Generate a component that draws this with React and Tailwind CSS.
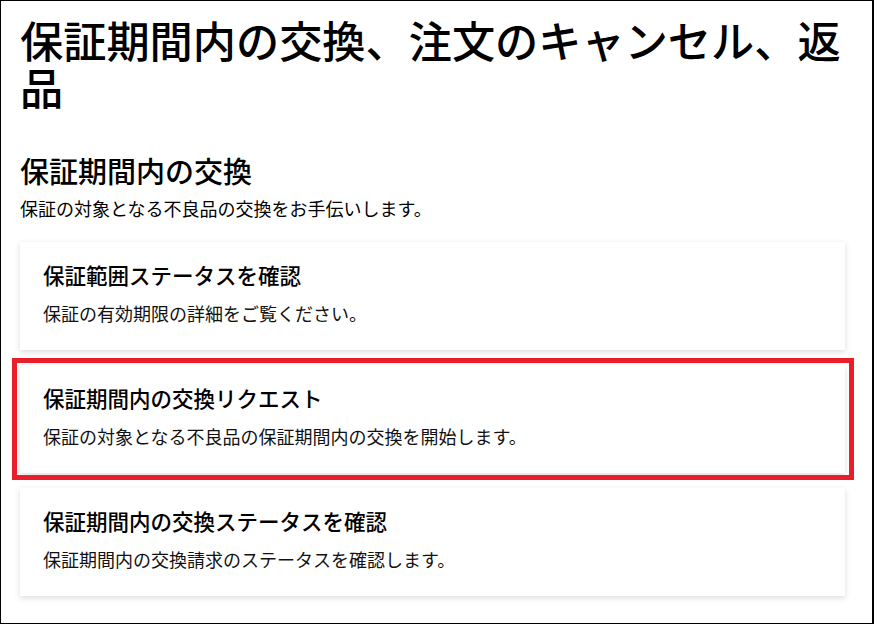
import React from 'react';

const cards = [
  {
    title: '保証範囲ステータスを確認',
    desc: '保証の有効期限の詳細をご覧ください。',
  },
  {
    title: '保証期間内の交換リクエスト',
    desc: '保証の対象となる不良品の保証期間内の交換を開始します。',
    marked: true,
  },
  {
    title: '保証期間内の交換ステータスを確認',
    desc: '保証期間内の交換請求のステータスを確認します。',
  },
];

const App = () => {
  return (
    <div
      className="w-[874px] h-[624px] bg-white border border-black border-r-2 overflow-hidden text-black"
      style={{ fontFamily: '"Noto Sans CJK JP", "Noto Sans", sans-serif' }}
    >
      <div className="pl-[19px] pr-[27px] pt-[15px]">
        <h1 className="text-[43.2px] leading-[47px] font-medium">
          保証期間内の交換、注文のキャンセル、返品
        </h1>
        <h2 className="mt-[42px] text-[29px] leading-[36px] font-medium">
          保証期間内の交換
        </h2>
        <p className="mt-[8px] text-[18px] leading-[24px]">
          保証の対象となる不良品の交換をお手伝いします。
        </p>
        <ul className="mt-[22px] flex flex-col gap-[15px]">
          {cards.map((c) => (
            <li
              key={c.title}
              className="relative h-[108px] bg-white pl-[23px] pt-[19px] shadow-[0_2px_6px_rgba(0,0,0,0.14)]"
            >
              <p className="text-[21.5px] leading-[28px] font-medium">{c.title}</p>
              <p className="mt-[12px] text-[18px] leading-[24px] text-[#111]">{c.desc}</p>
              {c.marked ? (
                <div className="absolute -left-[8px] -right-[9px] -top-[7px] -bottom-[7px] border-[5px] border-[#e81f2a]"></div>
              ) : (
                ''
              )}
            </li>
          ))}
        </ul>
      </div>
    </div>
  );
};

export default App;
